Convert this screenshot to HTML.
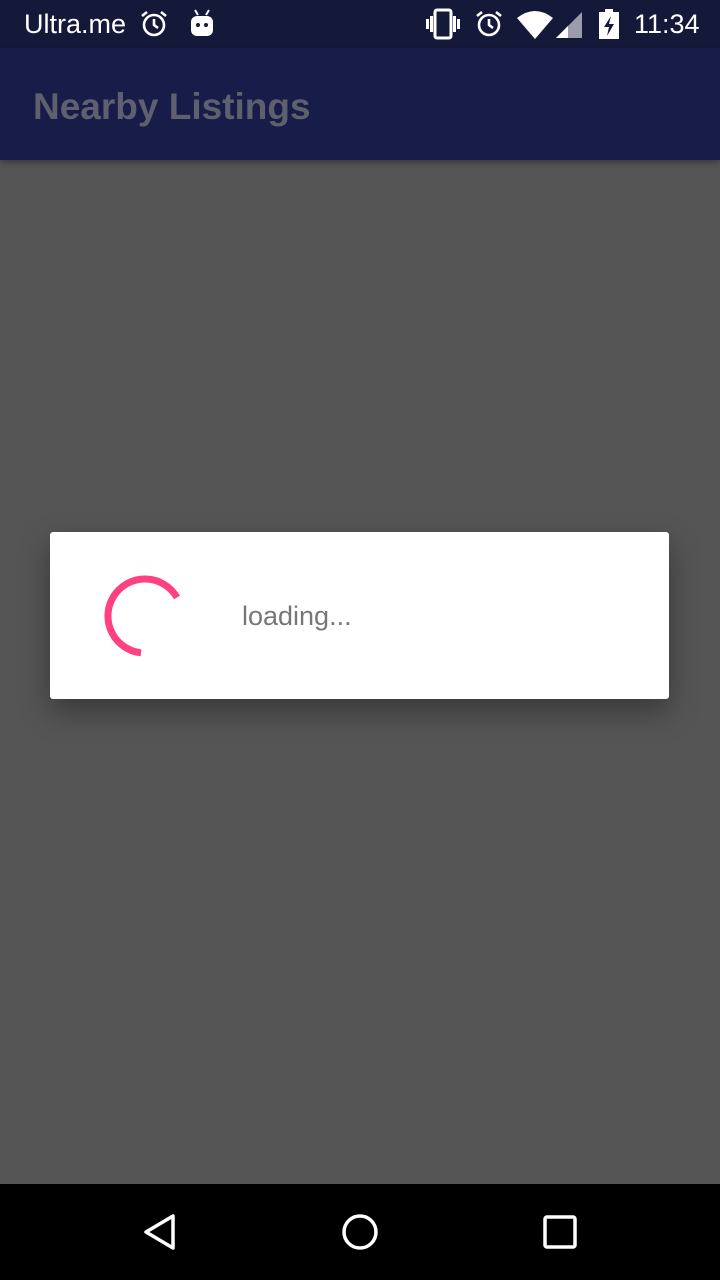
<!DOCTYPE html>
<html><head><meta charset="utf-8"><style>
*{margin:0;padding:0;box-sizing:border-box}
body{width:720px;height:1280px;background:#555;position:relative;overflow:hidden;font-family:"Liberation Sans",sans-serif}
.sb{position:absolute;left:0;top:0;width:720px;height:48px;background:#141839;color:#fff}
.ab{position:absolute;left:0;top:48px;width:720px;height:112px;background:#171d48;box-shadow:0 3px 6px rgba(0,0,0,.3)}
.ab span{position:absolute;left:33px;top:38px;font-size:37px;color:#5e6070;font-weight:bold;letter-spacing:0}
.nav{position:absolute;left:0;top:1184px;width:720px;height:96px;background:#000}
.dlg{position:absolute;left:50px;top:532px;width:619px;height:167px;background:#fff;border-radius:3px;box-shadow:0 12px 30px rgba(0,0,0,.35)}
.dlg span{position:absolute;left:192px;top:69px;font-size:27px;color:#777}
</style></head><body>
<div class="sb">
<span style="position:absolute;left:24px;top:9px;font-size:27px">Ultra.me</span>
<svg style="position:absolute;left:139px;top:9px" width="30" height="30" viewBox="0 0 30 30" fill="none" stroke="#fff" stroke-width="2.6"><circle cx="15" cy="16" r="10"/><path d="M15 10v6l4 3M3 7l5-4M27 7l-5-4"/></svg>
<svg style="position:absolute;left:189px;top:8px" width="26" height="30" viewBox="0 0 26 30"><path d="M6 2l3 5M20 2l-3 5" stroke="#fff" stroke-width="2"/><rect x="2" y="8" width="22" height="20" rx="6" fill="#fff"/><circle cx="9" cy="17" r="2" fill="#141839"/><circle cx="17" cy="17" r="2" fill="#141839"/></svg>
<svg style="position:absolute;left:424px;top:8px" width="38" height="32" viewBox="0 0 38 32" fill="#fff"><rect x="11" y="2" width="16" height="28" rx="2" fill="none" stroke="#fff" stroke-width="3"/><rect x="2" y="11" width="3" height="10"/><rect x="6" y="8" width="3" height="16"/><rect x="29" y="8" width="3" height="16"/><rect x="33" y="11" width="3" height="10"/></svg>
<svg style="position:absolute;left:474px;top:9px" width="30" height="30" viewBox="0 0 30 30" fill="none" stroke="#fff" stroke-width="2.6"><circle cx="15" cy="16" r="10"/><path d="M15 10v6l4 3M3 7l5-4M27 7l-5-4"/></svg>
<svg style="position:absolute;left:516px;top:10px" width="38" height="30" viewBox="0 0 38 30"><path d="M1 8Q19-6 37 8L19 29Z" fill="#fff"/></svg>
<svg style="position:absolute;left:554px;top:10px" width="30" height="30" viewBox="0 0 30 30"><path d="M28 2V28H2Z" fill="#9a9caa"/><path d="M14 16V28H2Z" fill="#fff"/></svg>
<svg style="position:absolute;left:597px;top:8px" width="24" height="32" viewBox="0 0 24 32"><rect x="8" y="1" width="8" height="4" fill="#fff"/><rect x="2" y="4" width="20" height="27" fill="#fff"/><path d="M14 8L7 19h5l-2 9 7-12h-5z" fill="#141839"/></svg>
<span style="position:absolute;left:634px;top:9px;font-size:27px">11:34</span>
</div>
<div class="ab"><span>Nearby Listings</span></div>
<div class="dlg"><span>loading...</span></div>
<svg style="position:absolute;left:0;top:0" width="720" height="1280"><path d="M177 597.5A37 37 0 1 0 141 652.8" fill="none" stroke="#ff4081" stroke-width="7"/></svg>
<div class="nav">
<svg style="position:absolute;left:140px;top:28px" width="40" height="40" viewBox="0 0 40 40"><path d="M33 4V36L6 20Z" fill="none" stroke="#fff" stroke-width="3.5" stroke-linejoin="round"/></svg>
<svg style="position:absolute;left:340px;top:28px" width="40" height="40" viewBox="0 0 40 40"><circle cx="20" cy="20" r="16" fill="none" stroke="#fff" stroke-width="3.5"/></svg>
<svg style="position:absolute;left:542px;top:30px" width="36" height="36" viewBox="0 0 36 36"><rect x="3" y="3" width="30" height="30" rx="2" fill="none" stroke="#fff" stroke-width="3.5"/></svg>
</div>
</body></html>
